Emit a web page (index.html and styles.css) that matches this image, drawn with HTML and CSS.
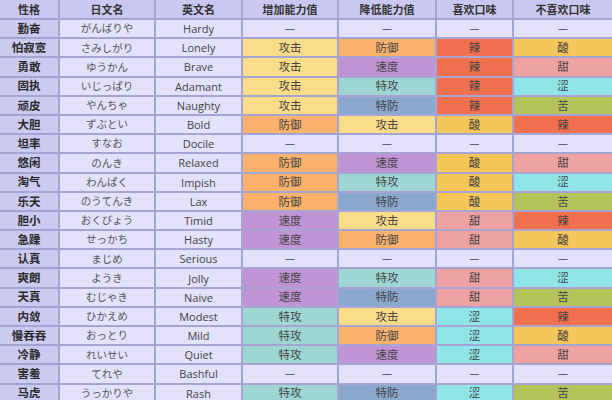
FILE: index.html
```html
<!DOCTYPE html>
<html lang="zh">
<head>
<meta charset="utf-8">
<title>性格表</title>
<link rel="stylesheet" href="styles.css">
</head>
<body>
<div class="natures">
  <div class="h">性格</div><div class="h">日文名</div><div class="h">英文名</div><div class="h">增加能力值</div><div class="h">降低能力值</div><div class="h">喜欢口味</div><div class="h">不喜欢口味</div>

  <div class="n">勤奋</div><div class="jp">がんばりや</div><div class="en">Hardy</div><div class="c">—</div><div class="c">—</div><div class="c">—</div><div class="c">—</div>
  <div class="n">怕寂寞</div><div class="jp">さみしがり</div><div class="en">Lonely</div><div class="c atk">攻击</div><div class="c def">防御</div><div class="c spicy">辣</div><div class="c sour">酸</div>
  <div class="n">勇敢</div><div class="jp">ゆうかん</div><div class="en">Brave</div><div class="c atk">攻击</div><div class="c spe">速度</div><div class="c spicy">辣</div><div class="c sweet">甜</div>
  <div class="n">固执</div><div class="jp">いじっぱり</div><div class="en">Adamant</div><div class="c atk">攻击</div><div class="c spa">特攻</div><div class="c spicy">辣</div><div class="c dry">涩</div>
  <div class="n">顽皮</div><div class="jp">やんちゃ</div><div class="en">Naughty</div><div class="c atk">攻击</div><div class="c spd">特防</div><div class="c spicy">辣</div><div class="c bitter">苦</div>
  <div class="n">大胆</div><div class="jp">ずぶとい</div><div class="en">Bold</div><div class="c def">防御</div><div class="c atk">攻击</div><div class="c sour">酸</div><div class="c spicy">辣</div>
  <div class="n">坦率</div><div class="jp">すなお</div><div class="en">Docile</div><div class="c">—</div><div class="c">—</div><div class="c">—</div><div class="c">—</div>
  <div class="n">悠闲</div><div class="jp">のんき</div><div class="en">Relaxed</div><div class="c def">防御</div><div class="c spe">速度</div><div class="c sour">酸</div><div class="c sweet">甜</div>
  <div class="n">淘气</div><div class="jp">わんぱく</div><div class="en">Impish</div><div class="c def">防御</div><div class="c spa">特攻</div><div class="c sour">酸</div><div class="c dry">涩</div>
  <div class="n">乐天</div><div class="jp">のうてんき</div><div class="en">Lax</div><div class="c def">防御</div><div class="c spd">特防</div><div class="c sour">酸</div><div class="c bitter">苦</div>
  <div class="n">胆小</div><div class="jp">おくびょう</div><div class="en">Timid</div><div class="c spe">速度</div><div class="c atk">攻击</div><div class="c sweet">甜</div><div class="c spicy">辣</div>
  <div class="n">急躁</div><div class="jp">せっかち</div><div class="en">Hasty</div><div class="c spe">速度</div><div class="c def">防御</div><div class="c sweet">甜</div><div class="c sour">酸</div>
  <div class="n">认真</div><div class="jp">まじめ</div><div class="en">Serious</div><div class="c">—</div><div class="c">—</div><div class="c">—</div><div class="c">—</div>
  <div class="n">爽朗</div><div class="jp">ようき</div><div class="en">Jolly</div><div class="c spe">速度</div><div class="c spa">特攻</div><div class="c sweet">甜</div><div class="c dry">涩</div>
  <div class="n">天真</div><div class="jp">むじゃき</div><div class="en">Naive</div><div class="c spe">速度</div><div class="c spd">特防</div><div class="c sweet">甜</div><div class="c bitter">苦</div>
  <div class="n">内敛</div><div class="jp">ひかえめ</div><div class="en">Modest</div><div class="c spa">特攻</div><div class="c atk">攻击</div><div class="c dry">涩</div><div class="c spicy">辣</div>
  <div class="n">慢吞吞</div><div class="jp">おっとり</div><div class="en">Mild</div><div class="c spa">特攻</div><div class="c def">防御</div><div class="c dry">涩</div><div class="c sour">酸</div>
  <div class="n">冷静</div><div class="jp">れいせい</div><div class="en">Quiet</div><div class="c spa">特攻</div><div class="c spe">速度</div><div class="c dry">涩</div><div class="c sweet">甜</div>
  <div class="n">害羞</div><div class="jp">てれや</div><div class="en">Bashful</div><div class="c">—</div><div class="c">—</div><div class="c">—</div><div class="c">—</div>
  <div class="n">马虎</div><div class="jp">うっかりや</div><div class="en">Rash</div><div class="c spa">特攻</div><div class="c spd">特防</div><div class="c dry">涩</div><div class="c bitter">苦</div>
</div>
</body>
</html>
```

FILE: styles.css
```css
html, body {
  margin: 0;
  padding: 0;
  background: #e3e1fb;
  overflow: hidden;
}

body {
  width: 612px;
  height: 400px;
  font-family: "Noto Sans CJK SC", "Noto Sans", sans-serif;
  color: #3a3a3a;
}

.natures {
  display: grid;
  grid-template-columns: 58px 94px 85px 94px 96px 75px 98px;
  grid-template-rows: 18px repeat(20, 17.2px);
  gap: 2px;
  background: #a6a4d2;
  width: 612px;
}

.natures > div {
  display: flex;
  align-items: center;
  justify-content: center;
  background: #e3e1fb;
  font-size: 11.5px;
  line-height: 1;
  white-space: nowrap;
  overflow: hidden;
}

.natures > .h {
  background: #cac7f1;
  font-size: 11px;
  font-weight: bold;
  color: #333;
}

.natures > .n {
  background: #cdcaf2;
  font-weight: bold;
  color: #2a2a2a;
}

.natures > .jp {
  font-size: 10.5px;
  color: #555;
}

.natures > .en {
  font-family: "Open Sans", "Noto Sans", sans-serif;
  font-size: 11px;
  color: #444;
}

.natures > .c {
  color: #444;
}

.natures > .atk { background: #fbdc88; }
.natures > .def { background: #f9b26c; }
.natures > .spe { background: #c194d6; }
.natures > .spa { background: #9dd6d2; }
.natures > .spd { background: #8aa7cd; }
.natures > .spicy { background: #f0704f; }
.natures > .sour { background: #f5c65a; }
.natures > .sweet { background: #eea2a2; }
.natures > .dry { background: #8fe5e7; }
.natures > .bitter { background: #b4c45a; }
```
